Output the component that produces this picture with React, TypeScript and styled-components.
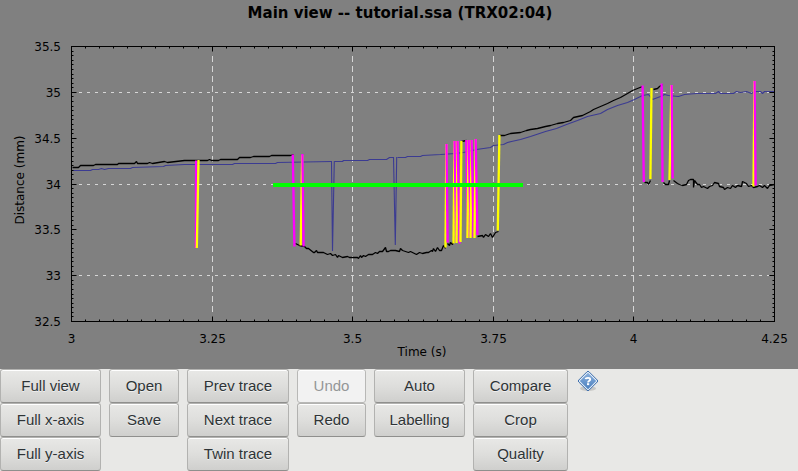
import React from "react";
import styled, { createGlobalStyle } from "styled-components";

const GlobalStyle = createGlobalStyle`
  body {
    margin: 0;
    background: #e8e8e6;
  }
`;

const Page = styled.main`
  display: flex;
  flex-direction: column;
`;

const Chart = styled.svg`
  display: block;
  width: 100%;
  height: auto;
  background: #808080;
`;

const ChartText = styled.text`
  font-family: "DejaVu Sans", sans-serif;
  font-size: 12px;
  fill: #000;
`;

const ChartTitle = styled(ChartText)`
  font-size: 15px;
  font-weight: bold;
`;

const Toolbar = styled.div`
  display: flex;
  align-items: flex-start;
  gap: 8px;
`;

const ButtonColumn = styled.div<{ $width: number }>`
  display: flex;
  flex: none;
  flex-direction: column;
  width: ${(props) => props.$width}px;
`;

const ToolButton = styled.button`
  box-sizing: border-box;
  height: 34px;
  padding: 0;
  border: 1px solid #b2b2b0;
  border-bottom-color: #8f8f8d;
  border-radius: 3px;
  background: linear-gradient(#e8e8e6, #dededc 50%, #cfcfcd);
  box-shadow: inset 0 1px 0 #fff;
  color: #2e3436;
  font-family: "Liberation Sans", Arial, sans-serif;
  font-size: 15px;
  line-height: 20px;
  text-shadow: 0 1px 0 #f0f0f0;

  &:disabled {
    border-color: #b8b8b6;
    background: #f2f2f2;
    color: #949697;
    text-shadow: none;
  }
`;

const HelpButton = styled.button`
  display: flex;
  margin: 1px 0 0;
  padding: 0 1px;
  border: 0;
  background: none;
`;

type Pulse = [color: "m" | "y", x1: number, y1: number, x2: number, y2: number];

const LEFT = 71.5;
const RIGHT = 774.5;
const TOP = 46.5;
const BOTTOM = 321.5;

const snap = (value: number) => Math.floor(value) + 0.5;
const xAt = (step: number, steps: number) => snap(LEFT + ((RIGHT - LEFT) * step) / steps);
const yAt = (step: number, steps: number) => snap(TOP + ((BOTTOM - TOP) * step) / steps);

const xLabels = ["3", "3.25", "3.5", "3.75", "4", "4.25"];
const yLabels = ["35.5", "35", "34.5", "34", "33.5", "33", "32.5"];

function tickPath() {
  const parts: string[] = [];
  for (let i = 1; i < 50; i++) {
    const length = i % 10 === 0 ? 5 : 2;
    const x = xAt(i, 50);
    parts.push(`M${x} ${TOP}v${length}M${x} ${BOTTOM}v${-length}`);
  }
  for (let i = 1; i < 60; i++) {
    const length = i % 10 === 0 ? 5 : 2;
    const y = yAt(i, 60);
    parts.push(`M${LEFT} ${y}h${length}M${RIGHT} ${y}h${-length}`);
  }
  return parts.join("");
}

const referenceTrace =
  "72,170 90,170 92,169 98,169 101,168 104,169 108,168 130,168 132,167 163,166 165,165 184,164 232,164 234,163 275,163 277,162 331,161";
const referenceTraceAfterFirst =
  "334,161 342,161 343,160 367,160 369,159 386,159 389,157 393,157";
const referenceTraceAfterSecond =
  "397,157 405,157 407,156 420,156 422,155 440,154 455,153 463,152 476,149 490,147 493,145 503,144 507,142 511,141 520,139 530,136 536,134 545,131 556,128 566,124 577,120 587,116 600,113 607,109 617,105 627,102 634,99 642,95 648,94 652,99 660,96 664,94 668,95 678,96 684,94 696,93 715,93 718,91 720,93 733,93 736,91 740,92 746,91 751,93 754,91 760,91 762,93 764,91 774,91";
const dips = ["331.5,161 332.5,251 334.3,161", "393.5,157 395.3,245 396.7,157"];

const blackTraces = [
  "72,167 78,167 80,165 93,165 95,164 117,164 118,163 134,163 136,161 137,163 147,163 149,162 152,163 164,161 167,162 184,160 207,160 209,159 211,160 218,160 220,159 237,159 239,157 250,157 253,156 269,156 271,155 290,155 293,154",
  "295,243 299,245 304,246 306,248 308,248 313,252 314,252 316,250 317,252 319,252 323,252 327,254 330,253 332,255 335,254 337,257 338,255 342,257 347,256 349,257 352,257 357,257 358,258 360,255 361,257 363,255 365,256 368,254 372,254 375,252 377,253 379,251 382,251 385,247 386,251 388,251 390,250 395,250 399,251 400,248 402,250 405,251 408,252 410,251 414,253 416,254 419,252 422,253 426,252 428,252 431,250 432,251 433,248 435,251 437,247 439,250 441,250 443,245 445,248",
  "447,243 449,245 450,242 452,244 453,241",
  "461,141 466,140",
  "477,236 482,235 483,237 485,234 488,236 490,233 492,237 495,232 498,231",
  "499,135 504,135 510,133 520,132 526,130 530,129 537,128 545,126 550,125 557,123 563,122 570,120 573,117 582,115 590,111 593,109 600,106 607,103 613,100 620,97 627,93 632,90 637,88 642,86",
  "653,89 657,88 659,86 662,84",
  "644,182 647,182 648,184 650,180",
  "663,182 665,184 668,184 669,180",
  "673,180 677,183 679,184 682,185 686,184 688,180 690,179 693,179 693,187 694,180 697,184 699,184 701,187 703,186 707,188 709,186 712,185 714,182 718,183 719,186 723,187 724,189 727,187 730,188 732,185 735,187 737,185 741,186 742,181 744,182 746,183 748,186 751,185 753,187 757,186 759,185 762,187 764,185 767,188 769,185 774,184",
];

const pulses: Pulse[] = [
  ["m", 196.1, 160.5, 195.9, 248],
  ["y", 198.5, 160, 196.8, 248],
  ["m", 292.8, 154.5, 294.4, 246.5],
  ["y", 302.2, 155, 300.7, 245.5],
  ["m", 302.4, 154, 303.6, 246.5],
  ["y", 446.4, 144, 445.5, 247.5],
  ["m", 446.5, 144, 447.6, 242.5],
  ["y", 454.5, 141, 453.5, 243.5],
  ["m", 454.5, 141, 456.3, 242],
  ["y", 457.5, 141, 456.5, 243],
  ["m", 457.6, 141, 459.6, 243.5],
  ["y", 461.4, 141, 460.5, 242],
  ["m", 466.3, 140, 468, 237],
  ["y", 468.7, 140, 467.4, 238],
  ["m", 468.7, 140, 470.7, 237],
  ["y", 471.7, 140, 470.5, 238],
  ["m", 471.7, 140, 473.6, 237],
  ["y", 475.7, 139, 474.5, 238],
  ["m", 475.7, 139, 477.4, 235],
  ["y", 499.4, 135, 497.8, 230.5],
  ["m", 642.6, 85.5, 643.8, 182],
  ["y", 651.5, 88, 650.4, 179],
  ["m", 661.6, 83.5, 662.6, 182],
  ["y", 671.4, 85, 669.5, 180],
  ["m", 671.6, 85, 672.6, 178.5],
  ["y", 754.4, 81, 753.5, 186.5],
  ["m", 754.6, 81, 755.6, 185.5],
];

const pulseColors = { m: "#ff00ff", y: "#ffff00" };

const columns = [
  { width: 101, labels: ["Full view", "Full x-axis", "Full y-axis"] },
  { width: 70, labels: ["Open", "Save"] },
  { width: 102, labels: ["Prev trace", "Next trace", "Twin trace"] },
  { width: 69, labels: ["Undo", "Redo"] },
  { width: 91, labels: ["Auto", "Labelling"] },
  { width: 95, labels: ["Compare", "Crop", "Quality"] },
];

function TraceChart() {
  return (
    <Chart viewBox="0 0 798 369" role="img" aria-label="Distance against time">
      <ChartTitle x={400} y={18} textAnchor="middle">
        Main view -- tutorial.ssa (TRX02:04)
      </ChartTitle>

      <g stroke="#d6d6d6" fill="none">
        {[1, 3, 5].map((i) => (
          <path key={i} d={`M79 ${yAt(i, 6)}H769`} strokeDasharray="3 5" />
        ))}
        {[1, 2, 3, 4].map((i) => (
          <path key={i} d={`M${xAt(i, 5)} 56V316`} strokeDasharray="6 4" />
        ))}
      </g>

      <g fill="none" stroke="#3b3b92" strokeWidth={1.1} strokeLinejoin="bevel">
        <polyline points={referenceTrace} transform="translate(.5 .5)" />
        <polyline points={referenceTraceAfterFirst} transform="translate(.5 .5)" />
        <polyline points={referenceTraceAfterSecond} transform="translate(.5 .5)" />
        {dips.map((points) => (
          <polyline key={points} points={points} />
        ))}
      </g>

      <g fill="none" stroke="#000" strokeWidth={1.3} strokeLinejoin="bevel">
        {blackTraces.map((points) => (
          <polyline key={points} points={points} transform="translate(.5 .5)" />
        ))}
      </g>

      {pulses.map(([color, x1, y1, x2, y2], i) => (
        <line
          key={i}
          x1={x1}
          y1={y1}
          x2={x2}
          y2={y2}
          stroke={pulseColors[color]}
          strokeWidth={2.3}
        />
      ))}
      <path d="M273 185H523" stroke="#00ff00" strokeWidth={4} />

      <path d={tickPath()} stroke="#000" fill="none" />
      <rect x={LEFT} y={TOP} width={RIGHT - LEFT} height={BOTTOM - TOP} stroke="#000" fill="none" />

      {yLabels.map((label, i) => (
        <ChartText key={label} x={61} y={Math.floor(yAt(i, 6)) + 5} textAnchor="end">
          {label}
        </ChartText>
      ))}
      {xLabels.map((label, i) => (
        <ChartText key={label} x={xAt(i, 5)} y={343} textAnchor="middle">
          {label}
        </ChartText>
      ))}
      <ChartText x={422} y={356} textAnchor="middle">
        Time (s)
      </ChartText>
      <ChartText transform="translate(24 180) rotate(-90)" textAnchor="middle">
        Distance (mm)
      </ChartText>
    </Chart>
  );
}

function HelpIcon() {
  return (
    <svg width="22" height="22" viewBox="0 0 22 22" aria-hidden="true">
      <defs>
        <linearGradient id="help-fill" x1="0" y1="0" x2="0" y2="1">
          <stop offset="0" stopColor="#8bb0dc" />
          <stop offset="1" stopColor="#4b80bf" />
        </linearGradient>
      </defs>
      <ellipse cx="11" cy="18.5" rx="8" ry="2.5" fill="#000" opacity=".14" />
      <path
        d="M10 1.8Q11 .8 12 1.8L20.2 10Q21.2 11 20.2 12L12 20.2Q11 21.2 10 20.2L1.8 12Q.8 11 1.8 10Z"
        fill="#e4edf7"
        stroke="#3c6dac"
      />
      <path d="M11 2.8L19.2 11L11 19.2L2.8 11Z" fill="url(#help-fill)" />
      <path
        d="M8.6 9.2Q8.8 7.9 11 7.9Q13.2 7.9 13.2 9.4Q13.2 10.3 12 11Q11.1 11.5 11.1 12.4"
        fill="none"
        stroke="#fff"
        strokeWidth="1.9"
      />
      <rect x="10" y="13.2" width="2.2" height="1.9" fill="#fff" />
    </svg>
  );
}

export default function App() {
  return (
    <Page>
      <GlobalStyle />
      <TraceChart />
      <Toolbar role="toolbar" aria-label="Trace tools">
        {columns.map(({ width, labels }) => (
          <ButtonColumn key={labels[0]} $width={width}>
            {labels.map((label) => (
              <ToolButton key={label} type="button" disabled={label === "Undo"}>
                {label}
              </ToolButton>
            ))}
          </ButtonColumn>
        ))}
        <HelpButton type="button" aria-label="Help">
          <HelpIcon />
        </HelpButton>
      </Toolbar>
    </Page>
  );
}
